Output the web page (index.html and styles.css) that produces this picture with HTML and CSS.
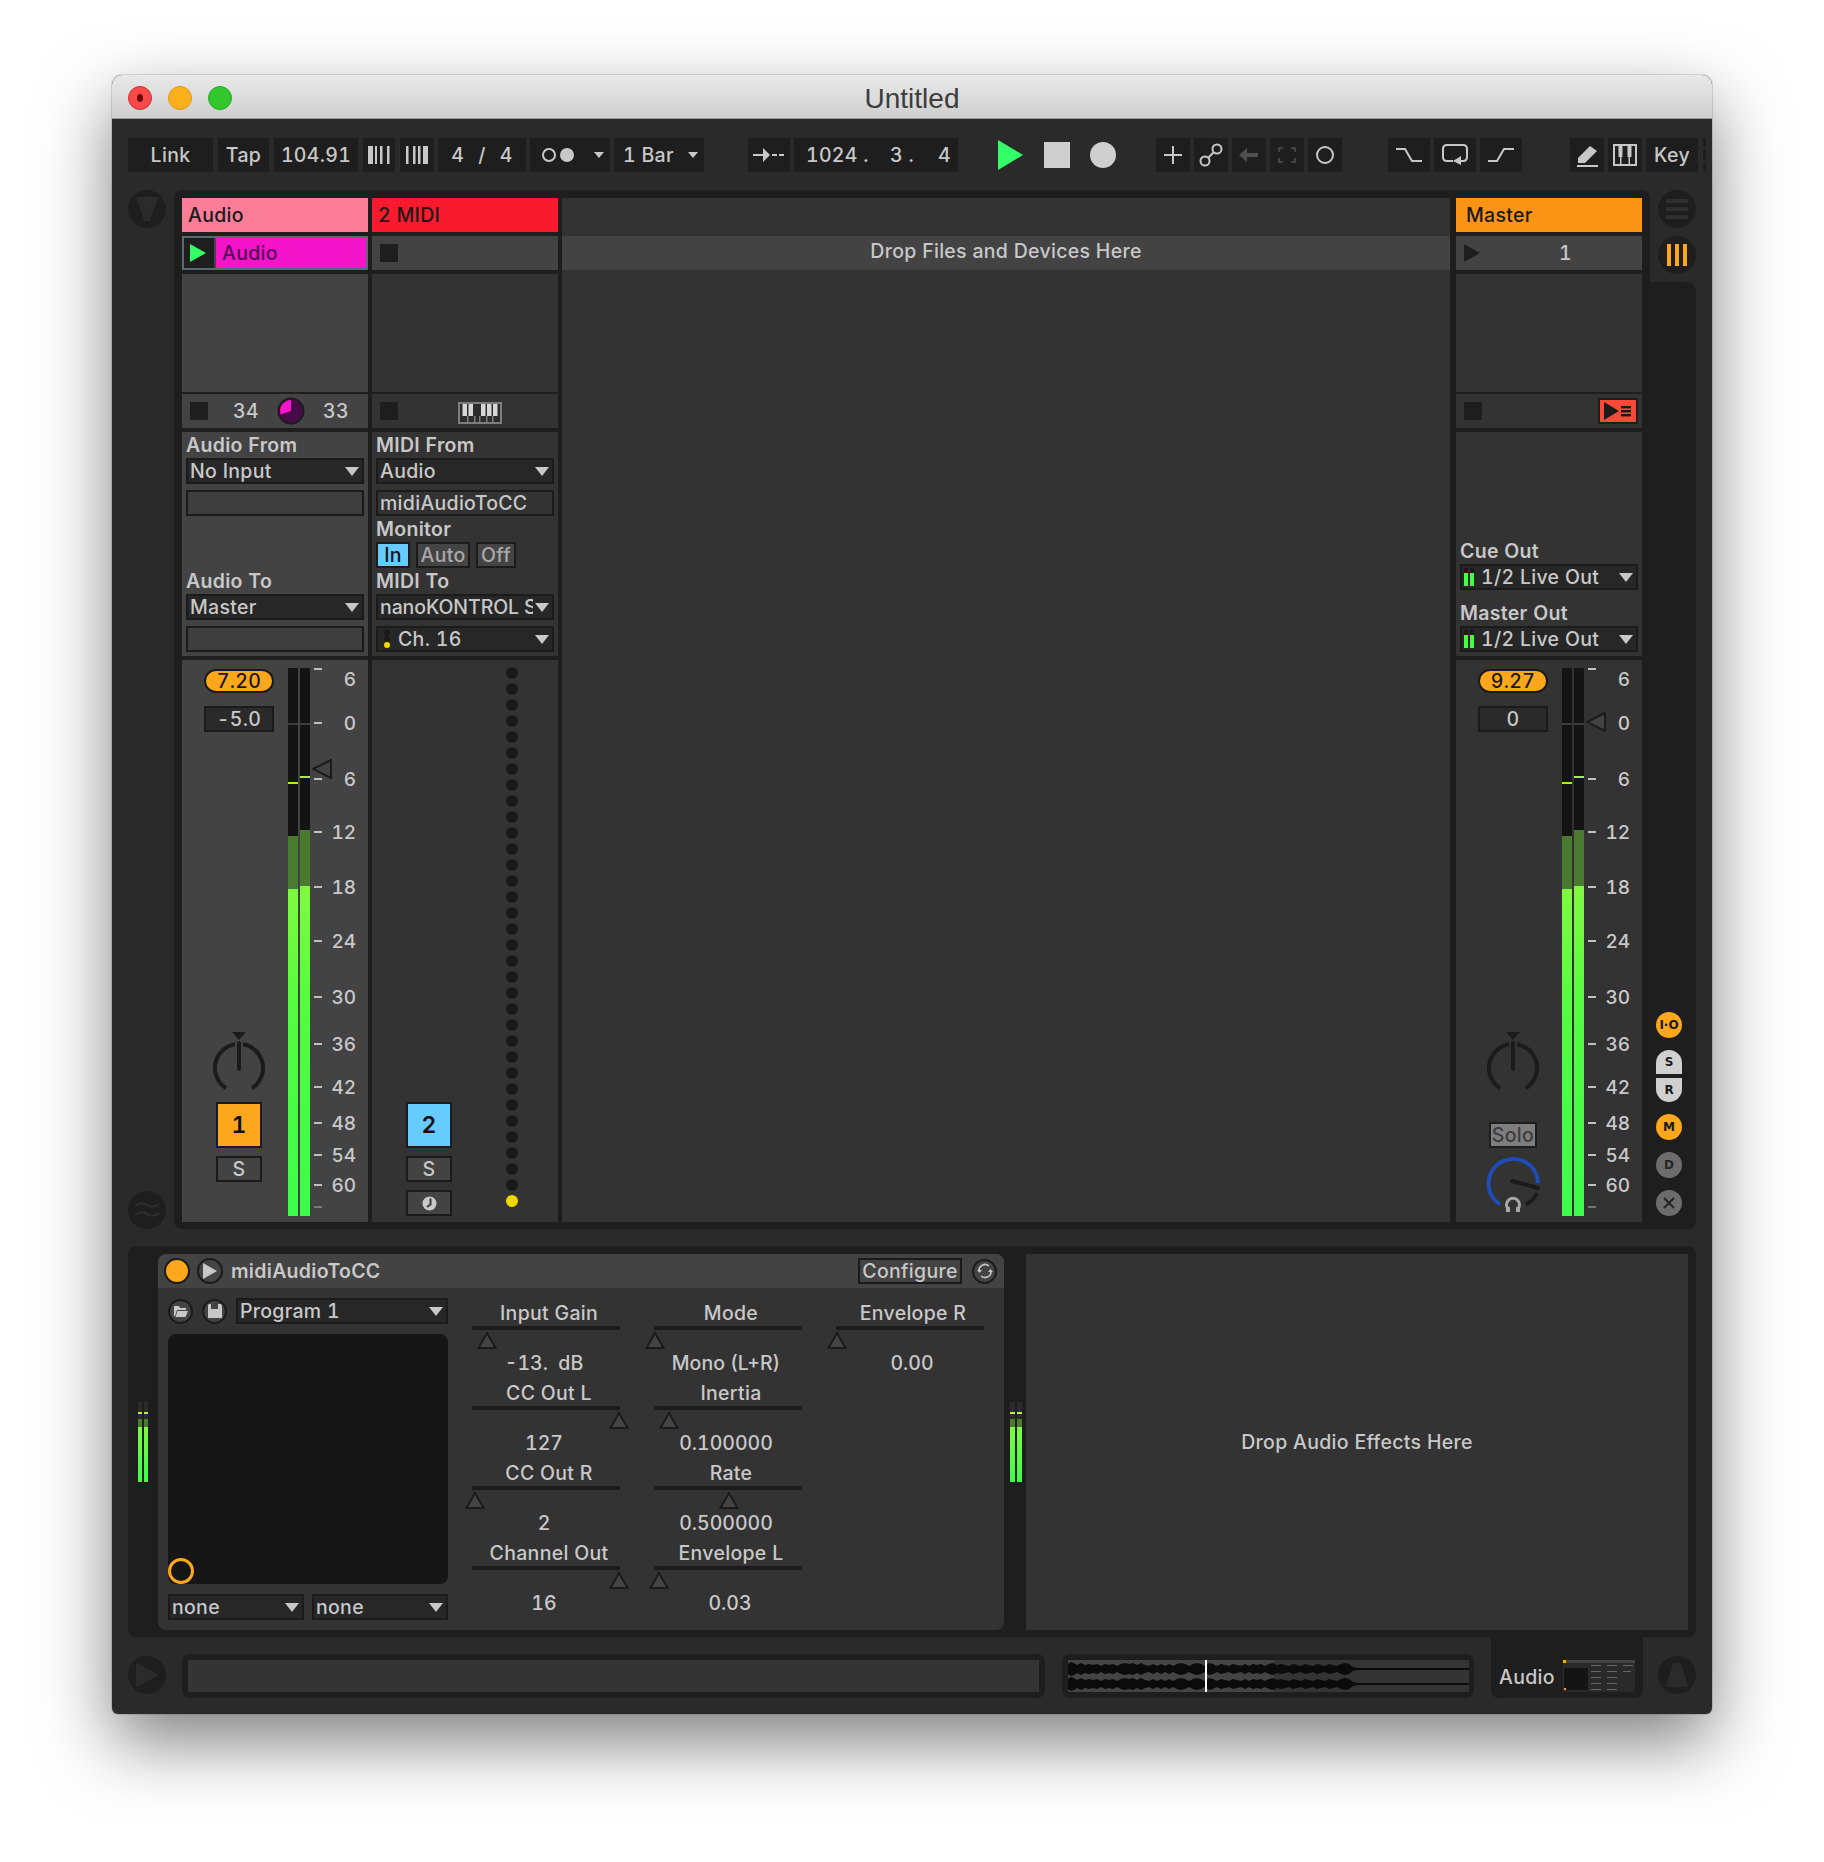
FILE: index.html
```html
<!DOCTYPE html>
<html lang="en">
<head>
    <meta charset="UTF-8">
    <title>Untitled</title>
    <link rel="stylesheet" href="styles.css">
</head>
<body>
<div class="window">
    <!-- title bar -->
    <div class="titlebar">
        <div class="lights">
            <span class="light red"><i></i></span>
            <span class="light yellow"></span>
            <span class="light green"></span>
        </div>
        <div class="title">Untitled</div>
    </div>

    <!-- transport -->
    <div class="toolbar">
        <div class="tb w85">Link</div>
        <div class="tb w51 ml5">Tap</div>
        <div class="tb w84 ml5">104.91</div>
        <div class="tb w32 ml5">
            <svg width="32" height="18" viewBox="0 0 32 18"><g fill="#c8c8c8"><rect x="5" width="5" height="18"/><rect x="12" width="2" height="18"/><rect x="17" width="2.5" height="18"/><rect x="24" width="2.5" height="18"/></g></svg>
        </div>
        <div class="tb w34 ml5">
            <svg width="34" height="18" viewBox="0 0 34 18"><g fill="#c8c8c8"><rect x="6" width="2.5" height="18"/><rect x="13" width="2.5" height="18"/><rect x="18" width="2.5" height="18"/><rect x="23" width="5" height="18"/></g></svg>
        </div>
        <div class="tb w88 ml4 timesig"><span>4</span><span>/</span><span>4</span></div>
        <div class="tb w80 ml4 between pad-r">
            <svg class="ml12" width="40" height="16" viewBox="0 0 40 16"><circle cx="7" cy="8" r="6" fill="none" stroke="#c8c8c8" stroke-width="2"/><circle cx="25" cy="8" r="7" fill="#c8c8c8"/></svg>
            <i class="arr small"></i>
        </div>
        <div class="tb w90 ml4 between pad-r"><span class="ml9">1 Bar</span><i class="arr small"></i></div>

        <div class="tb w42 ml44">
            <svg width="32" height="14" viewBox="0 0 32 14"><path d="M0 7H14" stroke="#c8c8c8" stroke-width="2"/><path d="M10 0L17 7L10 14Z" fill="#c8c8c8"/><path d="M19 7H24M26 7H31" stroke="#c8c8c8" stroke-width="2"/></svg>
        </div>
        <div class="tb w164 ml4 position"><span class="p1">1024 .</span><span class="p2">3 .</span><span class="p3">4</span></div>

        <svg class="ml40" width="25" height="30" viewBox="0 0 25 30"><path d="M0 0L25 15L0 30Z" fill="#33ff66"/></svg>
        <div class="stop-big ml21"></div>
        <div class="rec-big ml20"></div>

        <div class="tb w34 ml40">
            <svg width="20" height="20" viewBox="0 0 20 20"><path d="M10 1V19M1 10H19" stroke="#c8c8c8" stroke-width="2"/></svg>
        </div>
        <div class="tb w34 ml4">
            <svg width="24" height="24" viewBox="0 0 24 24"><g fill="none" stroke="#c8c8c8" stroke-width="2"><circle cx="6" cy="18" r="4.5"/><circle cx="18" cy="6" r="4.5"/><path d="M9 15L15 9"/></g></svg>
        </div>
        <div class="tb w34 ml4">
            <svg width="20" height="14" viewBox="0 0 20 14"><path d="M0 7L8 0V5H19V9H8V14Z" fill="#4f4f4f"/></svg>
        </div>
        <div class="tb w34 ml4">
            <svg width="18" height="16" viewBox="0 0 18 16"><path d="M1 5V1H5M13 1H17V5M17 11V15H13M5 15H1V11" fill="none" stroke="#4f4f4f" stroke-width="1.6"/></svg>
        </div>
        <div class="tb w34 ml4">
            <svg width="20" height="20" viewBox="0 0 20 20"><circle cx="10" cy="10" r="8" fill="none" stroke="#c8c8c8" stroke-width="2"/></svg>
        </div>

        <div class="tb w42 ml46">
            <svg width="28" height="14" viewBox="0 0 28 14"><path d="M1 1H10L17 13H27" fill="none" stroke="#c8c8c8" stroke-width="2"/></svg>
        </div>
        <div class="tb w42 ml4">
            <svg width="26" height="22" viewBox="0 0 26 22"><path d="M11 17H5Q1 17 1 13V5Q1 1 5 1H21Q25 1 25 5V13Q25 17 21 17H19" fill="none" stroke="#c8c8c8" stroke-width="2"/><path d="M19 12V21L11 17Z" fill="#c8c8c8"/></svg>
        </div>
        <div class="tb w42 ml4">
            <svg width="28" height="14" viewBox="0 0 28 14"><path d="M1 13H10L17 1H27" fill="none" stroke="#c8c8c8" stroke-width="2"/></svg>
        </div>

        <div class="tb w34 ml48">
            <svg width="24" height="24" viewBox="0 0 24 24"><path d="M3 15L15 3L22 8L10 20H3Z" fill="#c8c8c8"/><path d="M2 23H23" stroke="#c8c8c8" stroke-width="2"/></svg>
        </div>
        <div class="tb w34 ml4">
            <svg width="24" height="22" viewBox="0 0 24 22"><rect x="1" y="1" width="22" height="20" fill="#1e1e1e" stroke="#c8c8c8" stroke-width="2"/><g fill="#c8c8c8"><rect x="5.5" y="1" width="4" height="12"/><rect x="14.5" y="1" width="4" height="12"/><rect x="7" y="13" width="1.5" height="8"/><rect x="15.5" y="13" width="1.5" height="8"/></g></svg>
        </div>
        <div class="tb w52 ml4">Key</div>
        <div class="tb-cut"></div>
    </div>

    <!-- session -->
    <div class="session-row">
        <div class="left-rail">
            <div class="round">
                <svg width="24" height="26" viewBox="0 0 24 26"><path d="M2 2H22L14 24H10Z" fill="#2b2b2b" stroke="#2b2b2b" stroke-width="2" stroke-linejoin="round"/></svg>
            </div>
            <div class="round">
                <svg width="26" height="20" viewBox="0 0 26 20"><path d="M1 6Q7 1 13 5T25 4M1 15Q7 10 13 14T25 13" fill="none" stroke="#2f2f2f" stroke-width="2"/></svg>
            </div>
        </div>

        <div class="panel">
            <!-- track 1 -->
            <div class="track selected">
                <div class="track-title pink">Audio</div>
                <div class="clip-row playing">
                    <div class="clip-play"><svg width="16" height="18" viewBox="0 0 16 18"><path d="M0 0L16 9L0 18Z" fill="#33ff66"/></svg></div>
                    <div class="clip-name">Audio</div>
                </div>
                <div class="clips"></div>
                <div class="status">
                    <div class="stop"></div>
                    <span class="count c34">34</span>
                    <svg class="pie" width="28" height="28" viewBox="0 0 28 28"><circle cx="14" cy="14" r="12.5" fill="#470b47" stroke="#1b1b1b" stroke-width="2"/><path d="M14 14V3A11 11 0 0 0 3.6 17.5Z" fill="#f414c9"/></svg>
                    <span class="count c33">33</span>
                </div>
                <div class="io">
                    <div class="io-label">Audio From</div>
                    <div class="dd"><span>No Input</span><i class="arr"></i></div>
                    <div class="dd empty mt6"></div>
                    <div class="io-gap"></div>
                    <div class="io-label">Audio To</div>
                    <div class="dd"><span>Master</span><i class="arr"></i></div>
                    <div class="dd empty mt6"></div>
                </div>
                <div class="mixer">
                    <div class="strip">
                        <div class="pill">7.20</div>
                        <div class="numbox">-5.0</div>
                        <div class="grow"></div>
                        <svg class="knob" width="64" height="64" viewBox="0 0 64 64"><path d="M19 56.2A24 24 0 0 1 28 12.3M36 12.3A24 24 0 0 1 45 56.2" fill="none" stroke="#1b1b1b" stroke-width="4"/><path d="M32 11V37" stroke="#1b1b1b" stroke-width="4" stroke-linecap="round"/><path d="M25 0H39L32 8Z" fill="#1b1b1b"/></svg>
                        <div class="trackbtn orange">1</div>
                        <div class="smallbtn">S</div>
                        <div class="slot"></div>
                    </div>
                    <div class="meter"><div class="chan l"></div><div class="chan r"></div></div>
                    <div class="scale">
                        <div class="tick first" style="top:1px"><i></i><b>6</b></div>
                        <div class="tick" style="top:55px"><i></i><b>0</b></div>
                        <div class="tick" style="top:111px"><i></i><b>6</b></div>
                        <div class="tick" style="top:164px"><i></i><b>12</b></div>
                        <div class="tick" style="top:219px"><i></i><b>18</b></div>
                        <div class="tick" style="top:273px"><i></i><b>24</b></div>
                        <div class="tick" style="top:329px"><i></i><b>30</b></div>
                        <div class="tick" style="top:376px"><i></i><b>36</b></div>
                        <div class="tick" style="top:419px"><i></i><b>42</b></div>
                        <div class="tick" style="top:455px"><i></i><b>48</b></div>
                        <div class="tick" style="top:487px"><i></i><b>54</b></div>
                        <div class="tick" style="top:517px"><i></i><b>60</b></div>
                        <div class="tick last" style="top:539px"><i></i></div>
                        <svg class="fader" style="top:91px" width="20" height="20" viewBox="0 0 20 20"><path d="M1 10L19 1V19Z" fill="#434343" stroke="#1b1b1b" stroke-width="2"/></svg>
                    </div>
                </div>
            </div>

            <!-- track 2 -->
            <div class="track">
                <div class="track-title red">2 MIDI</div>
                <div class="clip-row"><div class="stop"></div></div>
                <div class="clips"></div>
                <div class="status">
                    <div class="stop"></div>
                    <svg class="piano" width="44" height="22" viewBox="0 0 44 22"><rect x="1" y="1" width="42" height="20" fill="#2c2c2c" stroke="#7c7c7c" stroke-width="2"/><g fill="#d6d6d6"><rect x="4.5" y="2" width="4.5" height="12"/><rect x="10.5" y="2" width="4.5" height="12"/><rect x="23" y="2" width="4.5" height="12"/><rect x="29" y="2" width="4.5" height="12"/><rect x="35" y="2" width="4.5" height="12"/></g><g fill="#7c7c7c"><rect x="9" y="14" width="1.5" height="6"/><rect x="16" y="14" width="1.5" height="6"/><rect x="21" y="14" width="1.5" height="6"/><rect x="28" y="14" width="1.5" height="6"/><rect x="34" y="14" width="1.5" height="6"/></g></svg>
                </div>
                <div class="io">
                    <div class="io-label">MIDI From</div>
                    <div class="dd"><span>Audio</span><i class="arr"></i></div>
                    <div class="dd name mt6"><span>midiAudioToCC</span></div>
                    <div class="io-label">Monitor</div>
                    <div class="monitor">
                        <div class="mon on w34">In</div>
                        <div class="mon w54">Auto</div>
                        <div class="mon w40">Off</div>
                    </div>
                    <div class="io-label">MIDI To</div>
                    <div class="dd"><span class="tight">nanoKONTROL S</span><i class="arr"></i></div>
                    <div class="dd mt6">
                        <div class="chan-dots"><i></i><i></i><i class="y"></i></div>
                        <span>Ch. 16</span><i class="arr"></i>
                    </div>
                </div>
                <div class="mixer">
                    <div class="strip">
                        <div class="grow"></div>
                        <div class="trackbtn blue">2</div>
                        <div class="smallbtn">S</div>
                        <div class="smallbtn clock">
                            <svg width="15" height="15" viewBox="0 0 15 15"><circle cx="7.5" cy="7.5" r="7" fill="#c8c8c8"/><path d="M8.5 2.5V8.5L5 11" fill="none" stroke="#3a3a3a" stroke-width="2"/></svg>
                        </div>
                    </div>
                    <div class="dots"><div class="dots-off"></div><div class="dot-on"></div></div>
                </div>
            </div>

            <!-- drop area -->
            <div class="dropzone">
                <div class="drop-head"></div>
                <div class="drop-row">Drop Files and Devices Here</div>
            </div>

            <!-- master -->
            <div class="track master">
                <div class="track-title amber">Master</div>
                <div class="clip-row scene">
                    <svg width="16" height="18" viewBox="0 0 16 18"><path d="M0 0L16 9L0 18Z" fill="#1e1e1e"/></svg>
                    <span class="scene-num">1</span>
                </div>
                <div class="clips"></div>
                <div class="status between-row">
                    <div class="stop"></div>
                    <div class="stopall">
                        <svg width="28" height="18" viewBox="0 0 28 18"><path d="M0 0L13 9L0 18Z" fill="#1a1a1a" transform="scale(1.15 1)"/><g fill="#1a1a1a"><rect x="17" y="4" width="10" height="2.4"/><rect x="17" y="8" width="10" height="2.4"/><rect x="17" y="12" width="10" height="2.4"/></g></svg>
                    </div>
                </div>
                <div class="io">
                    <div class="io-gap tall"></div>
                    <div class="io-label">Cue Out</div>
                    <div class="dd"><div class="mini-meter"><i></i><i></i></div><span>1/2 Live Out</span><i class="arr"></i></div>
                    <div class="io-label mt10">Master Out</div>
                    <div class="dd"><div class="mini-meter"><i></i><i></i></div><span>1/2 Live Out</span><i class="arr"></i></div>
                </div>
                <div class="mixer">
                    <div class="strip">
                        <div class="pill">9.27</div>
                        <div class="numbox">0</div>
                        <div class="grow"></div>
                        <svg class="knob" width="64" height="64" viewBox="0 0 64 64"><path d="M19 56.2A24 24 0 0 1 28 12.3M36 12.3A24 24 0 0 1 45 56.2" fill="none" stroke="#1b1b1b" stroke-width="4"/><path d="M32 11V37" stroke="#1b1b1b" stroke-width="4" stroke-linecap="round"/><path d="M25 0H39L32 8Z" fill="#1b1b1b"/></svg>
                        <div class="solo">Solo</div>
                        <svg class="cue" width="64" height="66" viewBox="0 0 64 66"><path d="M19 48.4A24.7 24.7 0 1 1 57 27" fill="none" stroke="#1f4db5" stroke-width="4"/><path d="M56 37A24.7 24.7 0 0 1 45 48.4" fill="none" stroke="#1b1b1b" stroke-width="4"/><path d="M31 25L57 32" stroke="#1b1b1b" stroke-width="4" stroke-linecap="round"/><path d="M27 53A6.5 6.5 0 1 1 37 53" fill="none" stroke="#a8a8a8" stroke-width="3"/><g fill="#a8a8a8"><rect x="25" y="51" width="4" height="5"/><rect x="35" y="51" width="4" height="5"/></g></svg>
                    </div>
                    <div class="meter"><div class="chan l"></div><div class="chan r"></div></div>
                    <div class="scale">
                        <div class="tick first" style="top:1px"><i></i><b>6</b></div>
                        <div class="tick" style="top:55px"><i></i><b>0</b></div>
                        <div class="tick" style="top:111px"><i></i><b>6</b></div>
                        <div class="tick" style="top:164px"><i></i><b>12</b></div>
                        <div class="tick" style="top:219px"><i></i><b>18</b></div>
                        <div class="tick" style="top:273px"><i></i><b>24</b></div>
                        <div class="tick" style="top:329px"><i></i><b>30</b></div>
                        <div class="tick" style="top:376px"><i></i><b>36</b></div>
                        <div class="tick" style="top:419px"><i></i><b>42</b></div>
                        <div class="tick" style="top:455px"><i></i><b>48</b></div>
                        <div class="tick" style="top:487px"><i></i><b>54</b></div>
                        <div class="tick" style="top:517px"><i></i><b>60</b></div>
                        <div class="tick last" style="top:539px"><i></i></div>
                        <svg class="fader" style="top:44px" width="20" height="20" viewBox="0 0 20 20"><path d="M1 10L19 1V19Z" fill="#434343" stroke="#1b1b1b" stroke-width="2"/></svg>
                    </div>
                </div>
            </div>
        </div>

        <!-- right rail -->
        <div class="right-rail">
            <div class="rail-top">
                <div class="round">
                    <svg width="22" height="20" viewBox="0 0 22 20"><g fill="#2f2f2f"><rect width="22" height="4"/><rect y="8" width="22" height="4"/><rect y="16" width="22" height="4"/></g></svg>
                </div>
                <div class="round">
                    <svg width="20" height="22" viewBox="0 0 20 22"><g fill="#fca71c"><rect width="4" height="22"/><rect x="8" width="4" height="22"/><rect x="16" width="4" height="22"/></g></svg>
                </div>
            </div>
            <div class="rail-body">
                <div class="side-btn orange">I·O</div>
                <div class="side-pair">
                    <div class="side-btn pair-t light-btn">S</div>
                    <div class="side-btn pair-b light-btn">R</div>
                </div>
                <div class="side-btn orange">M</div>
                <div class="side-btn grey">D</div>
                <div class="side-btn grey">
                    <svg width="14" height="14" viewBox="0 0 14 14"><path d="M2 2L12 12M12 2L2 12" stroke="#242424" stroke-width="2"/></svg>
                </div>
            </div>
        </div>
    </div>

    <!-- device view -->
    <div class="devices">
        <div class="dev-strip left"><div class="mini"><i></i><i></i></div></div>
        <div class="device">
            <div class="dev-head">
                <div class="dev-power"></div>
                <div class="dev-btn">
                    <svg width="14" height="16" viewBox="0 0 14 16"><path d="M0 0L14 8L0 16Z" fill="#c8c8c8"/></svg>
                </div>
                <div class="dev-name">midiAudioToCC</div>
                <div class="configure">Configure</div>
                <div class="dev-btn small">
                    <svg width="16" height="16" viewBox="0 0 16 16"><g fill="none" stroke="#c8c8c8" stroke-width="1.6"><path d="M2 7A6 6 0 0 1 12 3"/><path d="M14 9A6 6 0 0 1 4 13"/></g><path d="M0 7H5L2.5 10ZM11 9H16L13.5 6Z" fill="#c8c8c8"/></svg>
                </div>
            </div>
            <div class="dev-body">
                <div class="patcher">
                    <div class="preset">
                        <div class="dev-btn small">
                            <svg width="14" height="12" viewBox="0 0 14 12"><path d="M0 1H5L6 3H12V5H3L1 11H0Z" fill="#c8c8c8"/><path d="M3.5 6H14L11.5 12H1.5Z" fill="#c8c8c8"/></svg>
                        </div>
                        <div class="dev-btn small">
                            <svg width="14" height="14" viewBox="0 0 14 14"><path d="M1 0H13L14 2V14H0V1Z" fill="#c8c8c8"/><rect x="3" y="0" width="7" height="5" fill="#444"/></svg>
                        </div>
                        <div class="dd grow1"><span>Program 1</span><i class="arr"></i></div>
                    </div>
                    <div class="xy"><div class="xy-handle"></div></div>
                    <div class="none-row">
                        <div class="dd grow1"><span>none</span><i class="arr"></i></div>
                        <div class="dd grow1"><span>none</span><i class="arr"></i></div>
                    </div>
                </div>
                <div class="params">
                    <div class="param"><div class="p-label">Input Gain</div><div class="slider"><svg class="handle" style="left:15px" width="20" height="18" viewBox="0 0 20 18"><path d="M10 2L18.5 17H1.5Z" fill="#434343" stroke="#1b1b1b" stroke-width="2"/></svg></div><div class="p-value">-13.&nbsp; dB</div></div>
                    <div class="param"><div class="p-label">Mode</div><div class="slider"><svg class="handle" style="left:1px" width="20" height="18" viewBox="0 0 20 18"><path d="M10 2L18.5 17H1.5Z" fill="#434343" stroke="#1b1b1b" stroke-width="2"/></svg></div><div class="p-value">Mono (L+R)</div></div>
                    <div class="param"><div class="p-label">Envelope R</div><div class="slider"><svg class="handle" style="left:1px" width="20" height="18" viewBox="0 0 20 18"><path d="M10 2L18.5 17H1.5Z" fill="#434343" stroke="#1b1b1b" stroke-width="2"/></svg></div><div class="p-value plain">0.00</div></div>

                    <div class="param"><div class="p-label">CC Out L</div><div class="slider"><svg class="handle" style="left:147px" width="20" height="18" viewBox="0 0 20 18"><path d="M10 2L18.5 17H1.5Z" fill="#434343" stroke="#1b1b1b" stroke-width="2"/></svg></div><div class="p-value">127</div></div>
                    <div class="param"><div class="p-label">Inertia</div><div class="slider"><svg class="handle" style="left:15px" width="20" height="18" viewBox="0 0 20 18"><path d="M10 2L18.5 17H1.5Z" fill="#434343" stroke="#1b1b1b" stroke-width="2"/></svg></div><div class="p-value">0.100000</div></div>
                    <div></div>

                    <div class="param"><div class="p-label">CC Out R</div><div class="slider"><svg class="handle" style="left:3px" width="20" height="18" viewBox="0 0 20 18"><path d="M10 2L18.5 17H1.5Z" fill="#434343" stroke="#1b1b1b" stroke-width="2"/></svg></div><div class="p-value">2</div></div>
                    <div class="param"><div class="p-label">Rate</div><div class="slider"><svg class="handle" style="left:75px" width="20" height="18" viewBox="0 0 20 18"><path d="M10 2L18.5 17H1.5Z" fill="#434343" stroke="#1b1b1b" stroke-width="2"/></svg></div><div class="p-value">0.500000</div></div>
                    <div></div>

                    <div class="param"><div class="p-label">Channel Out</div><div class="slider"><svg class="handle" style="left:147px" width="20" height="18" viewBox="0 0 20 18"><path d="M10 2L18.5 17H1.5Z" fill="#434343" stroke="#1b1b1b" stroke-width="2"/></svg></div><div class="p-value">16</div></div>
                    <div class="param"><div class="p-label">Envelope L</div><div class="slider"><svg class="handle" style="left:5px" width="20" height="18" viewBox="0 0 20 18"><path d="M10 2L18.5 17H1.5Z" fill="#434343" stroke="#1b1b1b" stroke-width="2"/></svg></div><div class="p-value plain">0.03</div></div>
                </div>
            </div>
        </div>
        <div class="dev-strip right"><div class="mini"><i></i><i></i></div></div>
        <div class="effects">Drop Audio Effects Here</div>
    </div>

    <!-- status bar -->
    <div class="bottom">
        <div class="round low">
            <svg width="24" height="26" viewBox="0 0 24 26"><path d="M2 2L22 13L2 24Z" fill="#2b2b2b" stroke="#2b2b2b" stroke-width="2" stroke-linejoin="round"/></svg>
        </div>
        <div class="info"><div class="info-inner"></div></div>
        <div class="overview">
            <svg width="401" height="32" viewBox="0 0 401 32">
                <rect width="401" height="32" fill="#343434"/>
                <rect width="206" height="32" fill="#444"/>
                <defs>
                    <path id="wave" d="M0 0V-5L3 -7L6 -6L9 -4L13 -6L17 -4L21 -5L25 -4L29 -5L33 -3L37 -5L41 -4L45 -5L49 -3L53 -5L57 -6L61 -5L65 -6L69 -4L73 -6L77 -4L81 -3L85 -5L89 -3L93 -5L97 -3L101 -5L105 -3L109 -5L113 -6L117 -5L121 -3L125 -5L129 -6L133 -5L137 -3L141 -6L145 -5L149 -3L153 -5L157 -4L161 -3L165 -5L169 -4L173 -3L177 -5L181 -3L185 -5L189 -4L193 -5L197 -3L201 -5L205 -6L209 -4L213 -5L217 -4L221 -3L225 -5L229 -4L233 -3L237 -5L241 -4L245 -3L249 -5L253 -4L257 -3L261 -5L265 -4L269 -3L273 -5L277 -6L281 -5L285 -2L290 -1L401 -1V0Z" fill="#0b0b0b"/>
                </defs>
                <use href="#wave" transform="translate(0 9)"/>
                <use href="#wave" transform="translate(0 9) scale(1 -1)"/>
                <use href="#wave" transform="translate(0 24)"/>
                <use href="#wave" transform="translate(0 24) scale(1 -1)"/>
                <rect x="137" width="2" height="32" fill="#fff"/>
            </svg>
        </div>
        <div class="selector">
            <span>Audio</span>
            <svg width="72" height="32" viewBox="0 0 72 32">
                <rect width="72" height="32" fill="#2a2a2a"/>
                <rect x="0" y="0" width="72" height="3" fill="#444"/>
                <rect x="0" y="0" width="3" height="3" fill="#fca71c"/>
                <rect x="1" y="8" width="24" height="22" fill="#141414"/>
                <rect x="1" y="28" width="2" height="2" fill="#fca71c"/>
                <g fill="#666">
                    <rect x="28" y="5" width="10" height="1"/><rect x="44" y="5" width="10" height="1"/><rect x="60" y="5" width="10" height="1"/>
                    <rect x="28" y="11" width="10" height="1"/><rect x="44" y="11" width="10" height="1"/><rect x="60" y="11" width="8" height="1"/>
                    <rect x="28" y="17" width="10" height="1"/><rect x="44" y="17" width="10" height="1"/>
                    <rect x="28" y="23" width="10" height="1"/><rect x="44" y="23" width="10" height="1"/>
                    <rect x="28" y="29" width="10" height="1"/><rect x="44" y="29" width="10" height="1"/>
                </g>
            </svg>
        </div>
        <div class="round low">
            <svg width="24" height="26" viewBox="0 0 24 26"><path d="M9 2H15L22 24H2Z" fill="#2b2b2b" stroke="#2b2b2b" stroke-width="2" stroke-linejoin="round"/></svg>
        </div>
    </div>
</div>
</body>
</html>
```

FILE: styles.css
```css
/* Page */
body {
    margin: 0;
    padding: 75px 112px 148px;
    background-color: #ffffff;
    font-family: "Inter", "Liberation Sans", sans-serif;
    font-size: 19.5px;
    font-weight: 450;
    font-variant-numeric: tabular-nums;
    letter-spacing: 0.3px;
    color: #c8c8c8;
    line-height: 26px;
}

.window {
    width: 1600px;
    height: 1639px;
    background-color: #2a2a2a;
    border-radius: 10px 10px 6px 6px;
    box-shadow: 0 28px 70px rgba(0, 0, 0, 0.5), 0 0 0 1px rgba(0, 0, 0, 0.12);
    display: flex;
    flex-direction: column;
}

/* Title bar */
.titlebar {
    height: 44px;
    flex: none;
    box-sizing: border-box;
    padding-top: 2px;
    border-radius: 10px 10px 0 0;
    background: linear-gradient(#e9e9e9, #cfcfcf);
    border-bottom: 1px solid #9a9a9a;
    display: flex;
    align-items: center;
    position: relative;
}

.lights {
    display: flex;
    gap: 16px;
    padding-left: 16px;
}

.light {
    width: 24px;
    height: 24px;
    box-sizing: border-box;
    border-radius: 50%;
    display: flex;
    align-items: center;
    justify-content: center;
}

.light.red { background-color: #fc4a4a; border: 1px solid #d62b2b; }
.light.yellow { background-color: #fdb01c; border: 1px solid #d99a16; }
.light.green { background-color: #32c72d; border: 1px solid #27a724; }

.light i {
    width: 6px;
    height: 8px;
    border-radius: 50%;
    background-color: #6b0606;
}

.title {
    position: absolute;
    left: 0;
    right: 0;
    top: 11px;
    text-align: center;
    font-family: "Liberation Sans", sans-serif;
    font-size: 28px;
    font-weight: 400;
    letter-spacing: 0;
    color: #3c3c3c;
}

/* Toolbar */
.toolbar {
    display: flex;
    align-items: center;
    height: 34px;
    flex: none;
    margin: 19px 0 18px;
    padding-left: 16px;
}

.tb {
    height: 34px;
    flex: none;
    background-color: #1e1e1e;
    display: flex;
    align-items: center;
    justify-content: center;
}

.tb.between { justify-content: space-between; }
.tb.pad-r { padding-right: 6px; box-sizing: border-box; }

.w32 { width: 32px; }
.w34 { width: 34px; }
.w40 { width: 40px; }
.w42 { width: 42px; }
.w51 { width: 51px; }
.w52 { width: 52px; }
.w54 { width: 54px; }
.w80 { width: 80px; }
.w84 { width: 84px; }
.w85 { width: 85px; }
.w88 { width: 88px; }
.w90 { width: 90px; }
.w164 { width: 164px; }

.ml4 { margin-left: 4px; }
.ml5 { margin-left: 5px; }
.ml9 { margin-left: 9px; }
.ml12 { margin-left: 12px; }
.ml20 { margin-left: 20px; }
.ml21 { margin-left: 21px; }
.ml40 { margin-left: 40px; }
.ml44 { margin-left: 44px; }
.ml46 { margin-left: 46px; }
.ml48 { margin-left: 48px; }
.mt6 { margin-top: 6px; }
.mt10 { margin-top: 10px; }

.timesig { gap: 14px; }

.position { justify-content: flex-start; padding-left: 12px; box-sizing: border-box; }
.position .p1 { width: 84px; }
.position .p2 { width: 48px; }

.stop-big {
    width: 26px;
    height: 26px;
    flex: none;
    background-color: #cfcfcf;
}

.rec-big {
    width: 26px;
    height: 26px;
    flex: none;
    border-radius: 50%;
    background-color: #cfcfcf;
}

.tb-cut {
    width: 3px;
    height: 34px;
    margin-left: 5px;
    background: linear-gradient(#1e1e1e 0 9px, transparent 9px 12px, #1e1e1e 12px 22px, transparent 22px 25px, #1e1e1e 25px);
}

/* Session */
.session-row {
    display: flex;
    height: 1039px;
    flex: none;
    padding-left: 16px;
}

.left-rail {
    width: 38px;
    flex: none;
    margin-right: 8px;
    display: flex;
    flex-direction: column;
    justify-content: space-between;
}

.round {
    width: 38px;
    height: 38px;
    flex: none;
    border-radius: 50%;
    background-color: #1e1e1e;
    display: flex;
    align-items: center;
    justify-content: center;
}

.panel {
    width: 1476px;
    flex: none;
    box-sizing: border-box;
    padding: 8px 8px 7px;
    background-color: #1e1e1e;
    border-radius: 8px 8px 0 8px;
    display: flex;
}

.track {
    width: 186px;
    flex: none;
    margin-right: 4px;
    display: flex;
    flex-direction: column;
    --bg: #333333;
}

.track.selected { --bg: #434343; }
.track.master { margin: 0 0 0 6px; }

.track-title {
    height: 34px;
    flex: none;
    padding-left: 6px;
    line-height: 34px;
    color: #1a1a1a;
    font-weight: 500;
}

.track-title.pink { background-color: #fb7d98; }
.track-title.red { background-color: #f91a2e; }
.track-title.amber { background-color: #fb9414; padding-left: 10px; }

.clip-row {
    height: 34px;
    flex: none;
    margin-top: 4px;
    box-sizing: border-box;
    background-color: #434343;
    display: flex;
    align-items: center;
    padding-left: 8px;
}

.clip-row.playing {
    padding: 0;
    border: 2px solid #5b6a72;
    align-items: stretch;
}

.clip-play {
    width: 30px;
    flex: none;
    box-sizing: border-box;
    padding-right: 2px;
    background-color: #1e1e1e;
    display: flex;
    align-items: center;
    justify-content: center;
}

.clip-name {
    flex: 1;
    margin-left: 2px;
    padding-left: 6px;
    background-color: #f414c9;
    color: #4f0b55;
    line-height: 30px;
}

.scene-num {
    margin-left: 79px;
    font-weight: 500;
}

.stop {
    width: 18px;
    height: 18px;
    flex: none;
    background-color: #1e1e1e;
}

.clips {
    height: 118px;
    flex: none;
    margin-top: 4px;
    background-color: var(--bg);
}

.status {
    height: 34px;
    flex: none;
    margin-top: 2px;
    padding-left: 8px;
    background-color: var(--bg);
    display: flex;
    align-items: center;
    position: relative;
}

.between-row {
    justify-content: space-between;
    padding-right: 4px;
    box-sizing: border-box;
}

.count { width: 40px; text-align: center; }
.c34 { margin-left: 18px; }
.pie { margin-left: 11px; }
.c33 { margin-left: 11px; }
.piano { margin-left: 60px; margin-top: 4px; }

.stopall {
    width: 40px;
    height: 26px;
    box-sizing: border-box;
    border: 2px solid #1e1e1e;
    background-color: #f84a38;
    display: flex;
    align-items: center;
    justify-content: center;
}

/* Routing */
.io {
    height: 224px;
    flex: none;
    box-sizing: border-box;
    margin-top: 4px;
    padding: 0 4px;
    background-color: var(--bg);
    display: flex;
    flex-direction: column;
}

.io-label {
    height: 26px;
    flex: none;
    font-weight: 600;
}

.io-gap { height: 52px; flex: none; }
.io-gap.tall { height: 106px; }

.dd {
    height: 26px;
    flex: none;
    box-sizing: border-box;
    border: 2px solid #1b1b1b;
    background-color: #272727;
    padding: 0 3px 0 2px;
    display: flex;
    align-items: center;
    line-height: 22px;
}

.dd span {
    flex: 1;
    min-width: 0;
    overflow: hidden;
    white-space: nowrap;
}

.dd span.tight { letter-spacing: -0.1px; }

.dd.empty { background-color: #3e3e3e; }
.dd.name { background-color: #333333; }

.arr {
    flex: none;
    width: 0;
    height: 0;
    margin-left: 2px;
    border-left: 7px solid transparent;
    border-right: 7px solid transparent;
    border-top: 9px solid #c8c8c8;
}

.arr.small {
    border-left-width: 5px;
    border-right-width: 5px;
    border-top-width: 6px;
}

.monitor {
    display: flex;
    height: 26px;
    flex: none;
    gap: 6px;
}

.mon {
    box-sizing: border-box;
    border: 2px solid #1b1b1b;
    background-color: #444444;
    text-align: center;
    line-height: 22px;
    color: #a8a8a8;
}

.mon.on {
    background-color: #66ccff;
    color: #141414;
}

.chan-dots {
    width: 12px;
    margin: 0 5px 0 1px;
    display: flex;
    flex-direction: column;
    align-items: center;
    gap: 0;
}

.chan-dots i {
    width: 6px;
    height: 6px;
    border-radius: 50%;
    background-color: #1a1a1a;
}

.chan-dots i.y { background-color: #f2d800; }

.mini-meter {
    display: flex;
    gap: 2px;
    margin: 0 7px 0 0;
}

.mini-meter i {
    width: 4px;
    height: 18px;
    background: linear-gradient(#1a1a1a 0 5px, #44ff44 5px);
}

/* Mixer */
.mixer {
    flex: 1;
    margin-top: 4px;
    background-color: var(--bg);
    display: flex;
}

.strip {
    width: 70px;
    flex: none;
    padding: 9px 14px 6px 22px;
    display: flex;
    flex-direction: column;
    align-items: center;
}

.grow { flex: 1; }

.pill {
    width: 70px;
    height: 24px;
    flex: none;
    box-sizing: border-box;
    border: 2px solid #1b1b1b;
    border-radius: 12px;
    background-color: #fca71c;
    color: #1a1a1a;
    text-align: center;
    line-height: 20px;
}

.numbox {
    width: 70px;
    height: 26px;
    flex: none;
    margin-top: 13px;
    box-sizing: border-box;
    border: 2px solid #1b1b1b;
    background-color: #2a2a2a;
    text-align: center;
    line-height: 22px;
}

.knob { flex: none; margin-bottom: 6px; }

.trackbtn {
    width: 46px;
    height: 46px;
    flex: none;
    box-sizing: border-box;
    border: 2px solid #1b1b1b;
    text-align: center;
    line-height: 42px;
    font-size: 23px;
    font-weight: 600;
    color: #111111;
}

.trackbtn.orange { background-color: #fca71c; }
.trackbtn.blue { background-color: #66ccff; }

.smallbtn {
    width: 46px;
    height: 26px;
    flex: none;
    margin-top: 8px;
    box-sizing: border-box;
    border: 2px solid #1b1b1b;
    background-color: #434343;
    text-align: center;
    line-height: 22px;
}

.smallbtn.clock {
    display: flex;
    align-items: center;
    justify-content: center;
}

.slot { height: 26px; flex: none; margin-top: 8px; }

.solo {
    width: 48px;
    height: 26px;
    flex: none;
    margin-top: 20px;
    box-sizing: border-box;
    border: 2px solid #1e1e1e;
    background-color: #7e7e7e;
    color: #3c3c3c;
    text-align: center;
    line-height: 22px;
}

.cue { flex: none; margin: 8px 0 -6px; }

.meter {
    display: flex;
    gap: 2px;
    height: 548px;
    flex: none;
    margin-top: 8px;
}

.chan {
    width: 10px;
}

.chan.l {
    background: linear-gradient(#141414 0 55px, #3c3c3c 55px 57px, #141414 57px 114px, #a8f040 114px 116px, #141414 116px 168px, #4a7a30 168px 221px, #80f940 221px, #55fb40 340px, #3dfb4c 548px);
}

.chan.r {
    background: linear-gradient(#141414 0 55px, #3c3c3c 55px 57px, #141414 57px 108px, #a8f040 108px 110px, #141414 110px 162px, #4a7a30 162px 218px, #80f940 218px, #55fb40 340px, #3dfb4c 548px);
}

.scale {
    position: relative;
    width: 42px;
    margin: 8px 0 0 4px;
}

.tick {
    position: absolute;
    left: 0;
    right: 0;
    height: 0;
    display: flex;
    align-items: center;
    justify-content: space-between;
}

.tick i {
    width: 8px;
    height: 2px;
    background-color: #c0c0c0;
}

.tick b {
    font-weight: 450;
    font-size: 19px;
    letter-spacing: 0;
    margin-top: 2px;
}

.tick.first b { margin-top: 22px; }
.tick.last i { background-color: #777777; }

.fader {
    position: absolute;
    left: -2px;
}

.dots {
    width: 12px;
    margin: 5px 0 0 28px;
}

.dots-off {
    height: 528px;
    background: radial-gradient(circle at center, #1a1a1a 5.5px, transparent 6.2px) center top / 16px 16px repeat-y;
}

.dot-on {
    width: 12px;
    height: 12px;
    margin-top: 2px;
    border-radius: 50%;
    background-color: #f2d800;
}

.dropzone {
    width: 888px;
    flex: none;
    background-color: #333333;
}

.drop-head { height: 38px; }

.drop-row {
    height: 34px;
    background-color: #434343;
    text-align: center;
    line-height: 30px;
}

/* Right rail */
.right-rail {
    width: 46px;
    flex: none;
    display: flex;
    flex-direction: column;
}

.rail-top {
    height: 92px;
    flex: none;
    padding-left: 8px;
    display: flex;
    flex-direction: column;
    gap: 8px;
}

.rail-body {
    flex: 1;
    padding: 0 0 13px 6px;
    background-color: #1e1e1e;
    border-radius: 0 10px 8px 0;
    display: flex;
    flex-direction: column;
    justify-content: flex-end;
    gap: 12px;
}

.side-pair {
    display: flex;
    flex-direction: column;
    gap: 4px;
}

.side-btn {
    width: 26px;
    height: 26px;
    flex: none;
    border-radius: 13px;
    font-family: "DejaVu Sans", sans-serif;
    font-size: 12px;
    font-weight: 700;
    letter-spacing: 0;
    color: #1a1a1a;
    display: flex;
    align-items: center;
    justify-content: center;
}

.side-btn.orange { background-color: #fca71c; }
.side-btn.grey { background-color: #6c6c6c; color: #242424; }
.side-btn.light-btn { background-color: #d0d0d0; height: 24px; }
.side-btn.pair-t { border-radius: 13px 13px 0 0; }
.side-btn.pair-b { border-radius: 0 0 13px 13px; }

/* Devices */
.devices {
    display: flex;
    height: 391px;
    flex: none;
    box-sizing: border-box;
    margin: 17px 16px 0;
    padding: 8px 0 7px;
    background-color: #1e1e1e;
    border-radius: 8px;
}

.dev-strip {
    flex: none;
    display: flex;
    align-items: center;
    box-sizing: border-box;
}

.dev-strip.left { width: 30px; padding-left: 10px; }
.dev-strip.right { width: 22px; padding-left: 6px; }

.mini {
    display: flex;
    gap: 2px;
}

.mini i {
    width: 4px;
    height: 80px;
    background: linear-gradient(#2c2c2c 0 10px, #b8f040 10px 12px, #2c2c2c 12px 17px, #4a7a30 17px 25px, #80f940 25px, #3dfb4c 80px);
}

.dev-strip.right .mini i { width: 5px; }

.device {
    width: 846px;
    flex: none;
    background-color: #333333;
    border-radius: 8px;
    display: flex;
    flex-direction: column;
}

.dev-head {
    height: 34px;
    flex: none;
    box-sizing: border-box;
    padding: 0 7px 0 6px;
    background-color: #434343;
    border-radius: 8px 8px 0 0;
    display: flex;
    align-items: center;
    gap: 7px;
}

.dev-power,
.dev-btn {
    width: 26px;
    height: 26px;
    flex: none;
    box-sizing: border-box;
    border: 2px solid #1b1b1b;
    border-radius: 50%;
    background-color: #fca71c;
}

.dev-btn {
    background-color: #444444;
    display: flex;
    align-items: center;
    justify-content: center;
}

.dev-btn.small { width: 25px; height: 25px; }

.dev-name {
    flex: 1;
    margin-left: 1px;
    font-weight: 600;
}

.configure {
    width: 104px;
    height: 26px;
    box-sizing: border-box;
    margin-right: 3px;
    border: 2px solid #1b1b1b;
    text-align: center;
    line-height: 22px;
}

.dev-body {
    flex: 1;
    padding: 10px 0 0 10px;
    display: flex;
}

.patcher {
    width: 280px;
    flex: none;
}

.preset {
    display: flex;
    gap: 9px;
    align-items: center;
}

.grow1 { flex: 1; min-width: 0; }

.xy {
    height: 250px;
    margin-top: 10px;
    position: relative;
    background-color: #161616;
    border-radius: 8px;
}

.xy-handle {
    position: absolute;
    left: 0;
    bottom: 0;
    width: 26px;
    height: 26px;
    box-sizing: border-box;
    border: 3px solid #fca71c;
    border-radius: 50%;
}

.none-row {
    display: flex;
    gap: 8px;
    margin-top: 10px;
}

.params {
    margin: 2px 0 0 24px;
    display: grid;
    grid-template-columns: 148px 148px 148px;
    grid-auto-rows: 80px;
    column-gap: 34px;
}

.p-label {
    height: 26px;
    text-align: center;
    padding-left: 6px;
    white-space: nowrap;
}

.slider {
    height: 24px;
    position: relative;
    box-sizing: border-box;
    border-top: 4px solid #1b1b1b;
}

.handle {
    position: absolute;
    top: 1px;
    transform: translateX(-50%);
}

.p-value {
    text-align: center;
    padding-right: 4px;
    white-space: nowrap;
    letter-spacing: 0;
}

.p-value.plain { padding: 0 0 0 4px; }

.effects {
    width: 662px;
    flex: none;
    background-color: #333333;
    display: flex;
    align-items: center;
    justify-content: center;
}

/* Bottom bar */
.bottom {
    display: flex;
    align-items: flex-end;
    height: 61px;
    flex: none;
    padding: 0 16px;
}

.round.low { margin-bottom: 4px; }

.info {
    width: 863px;
    height: 44px;
    flex: none;
    margin-left: 16px;
    box-sizing: border-box;
    padding: 6px;
    background-color: #1e1e1e;
    border-radius: 8px;
}

.info-inner {
    height: 100%;
    background-color: #343434;
}

.overview {
    width: 412px;
    height: 44px;
    flex: none;
    margin-left: 17px;
    box-sizing: border-box;
    padding: 6px;
    background-color: #1e1e1e;
    border-radius: 8px;
}

.overview svg { display: block; }

.selector {
    width: 152px;
    height: 61px;
    flex: none;
    margin: 0 15px 0 17px;
    box-sizing: border-box;
    padding: 0 8px 6px 8px;
    background-color: #1e1e1e;
    border-radius: 0 0 8px 8px;
    display: flex;
    align-items: flex-end;
    justify-content: space-between;
}

.selector span {
    font-weight: 500;
    margin-bottom: 2px;
}
```
